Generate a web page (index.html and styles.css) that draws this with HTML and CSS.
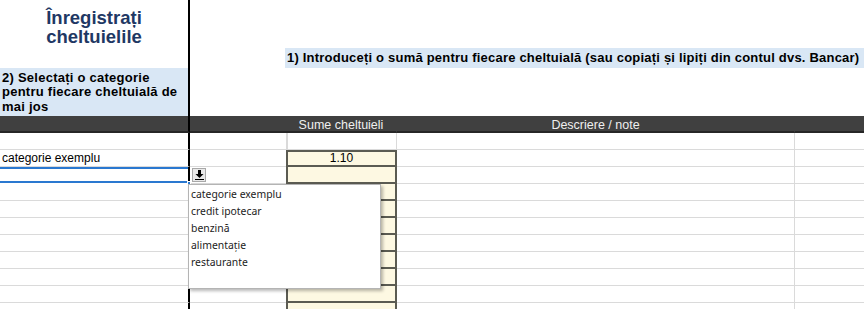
FILE: index.html
```html
<!DOCTYPE html>
<html lang="ro">
<head>
<meta charset="UTF-8" />
<title>Înregistrați cheltuielile</title>
<link rel="stylesheet" href="styles.css">
</head>
<body>
<div class="sheet">

  <!-- top: title + instructions -->
  <div class="top">
    <div class="top-left">
      <h1>Înregistrați<br>cheltuielile</h1>
      <div class="note left-note">2) Selectați o categorie pentru fiecare cheltuială de mai jos</div>
    </div>
    <div class="top-right">
      <div class="note right-note">1) Introduceți o sumă pentru fiecare cheltuială (sau copiați și lipiți din contul dvs. Bancar)</div>
    </div>
  </div>

  <!-- grid of cells -->
  <div class="grid">
    <div class="c a hd"></div><div class="c b hd"></div><div class="c s hd">Sume cheltuieli</div><div class="c d hd">Descriere / note</div><div class="c e hd"></div>

    <div class="c a"></div><div class="c b"></div><div class="c s blank"></div><div class="c d"></div><div class="c e"></div>

    <div class="c a">categorie exemplu</div><div class="c b"></div><div class="c s amt first">1.10</div><div class="c d"></div><div class="c e"></div>

    <div class="c a selected"><span class="handle"></span></div>
    <div class="c b"><span class="dd-btn"><svg width="9" height="10" viewBox="0 0 9 10"><path d="M3 0h3v4h2.5L4.5 8 .5 4H3z" fill="#000"/><rect x="0" y="9" width="9" height="1" fill="#000"/></svg></span></div>
    <div class="c s amt"></div><div class="c d"></div><div class="c e"></div>

    <div class="c a"></div><div class="c b"></div><div class="c s amt"></div><div class="c d"></div><div class="c e"></div>
    <div class="c a"></div><div class="c b"></div><div class="c s amt"></div><div class="c d"></div><div class="c e"></div>
    <div class="c a"></div><div class="c b"></div><div class="c s amt"></div><div class="c d"></div><div class="c e"></div>
    <div class="c a"></div><div class="c b"></div><div class="c s amt"></div><div class="c d"></div><div class="c e"></div>
    <div class="c a"></div><div class="c b"></div><div class="c s amt"></div><div class="c d"></div><div class="c e"></div>
    <div class="c a"></div><div class="c b"></div><div class="c s amt"></div><div class="c d"></div><div class="c e"></div>
    <div class="c a"></div><div class="c b"></div><div class="c s amt"></div><div class="c d"></div><div class="c e"></div>
    <div class="c a"></div><div class="c b"></div><div class="c s amt"></div><div class="c d"></div><div class="c e"></div>

    <!-- open category list -->
    <ul class="dropdown">
      <li>categorie exemplu</li>
      <li>credit ipotecar</li>
      <li>benzină</li>
      <li>alimentație</li>
      <li>restaurante</li>
    </ul>
  </div>

</div>
</body>
</html>
```

FILE: styles.css
```css
:root{--navy:#1f3864;--band:#d9e7f5;--amt:#fdf8e2;--amt-line:#5b5b52;--grid:#dadada;}
*{box-sizing:border-box;}
body{margin:0;background:#fff;font-family:"Liberation Sans",Arial,sans-serif;color:#000;overflow:hidden;}
.sheet{width:864px;height:309px;overflow:hidden;}

/* top area ------------------------------------------------ */
.top{display:grid;grid-template-columns:190px 1fr;height:116px;}
.top-left{border-right:2px solid #000;display:flex;flex-direction:column;}
h1{
  margin:0;height:68px;padding-top:8px;text-align:center;
  font-size:18.5px;line-height:19px;font-weight:700;color:var(--navy);
}
.note{background:var(--band);font-weight:700;font-size:13px;letter-spacing:.25px;}
.left-note{flex:1;padding:3px 4px 0 2px;line-height:14.3px;}
.top-right{padding:48px 0 0 95px;}
.right-note{height:20px;line-height:20px;padding-left:2px;white-space:nowrap;letter-spacing:.21px;}

/* cells --------------------------------------------------- */
.grid{
  position:relative;display:grid;
  grid-template-columns:190px 96px 111px 398px 1fr;grid-auto-rows:17px;
}
.c{border-bottom:1px solid var(--grid);font-size:12px;line-height:17px;white-space:nowrap;}
.a{border-right:2px solid #000;padding-left:2px;position:relative;}
.b{padding-left:2px;}
.s{border-left:2px solid var(--grid);border-right:1px solid var(--grid);text-align:center;}
.d{border-right:1px solid var(--grid);}
.hd{
  background:#404040;color:#efefef;font-size:12.5px;line-height:18px;text-align:center;
  border-bottom:2px solid #262626;border-left:none;border-right-color:#404040;
}
.a.hd{border-right-color:#000;}
.amt{background:var(--amt);border-left:2px solid var(--amt-line);border-right:2px solid var(--amt-line);border-bottom:2px solid var(--amt-line);}
.amt.first{box-shadow:inset 0 2px 0 var(--amt-line);line-height:17px;}
.blank{border-right:1px solid var(--grid);}

/* selected cell + list button ----------------------------- */
.selected{box-shadow:inset 0 2px 0 #2a78d0,inset 0 -2px 0 #2a78d0;border-bottom-color:transparent;}
.handle{position:absolute;right:-3px;bottom:-2px;width:4px;height:4px;background:#2a78d0;border:1px solid #fff;}
.dd-btn{
  display:inline-flex;align-items:center;justify-content:center;
  width:14px;height:14px;margin-top:1px;background:#e9e9e9;border:1px solid #a8a8a8;vertical-align:top;
}
.dd-btn svg{display:block;}

.dropdown{
  position:absolute;left:188px;top:68px;width:193px;height:105px;margin:0;padding:1px 0 0 2px;
  list-style:none;background:#fff;border:1px solid #b4b4b4;
  box-shadow:2px 2px 3px rgba(0,0,0,.28);
  font-family:"Noto Sans","Open Sans",sans-serif;font-size:10.4px;line-height:17px;color:#222;
}
```
